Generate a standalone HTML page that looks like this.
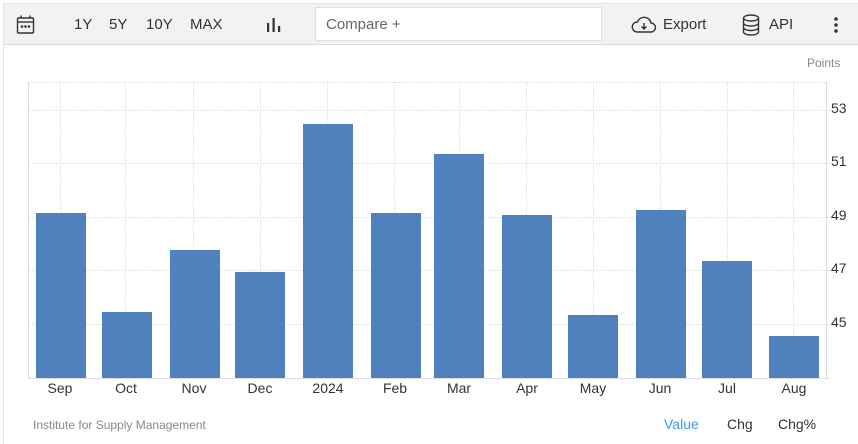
<!DOCTYPE html>
<html><head><meta charset="utf-8"><style>
html,body{margin:0;padding:0;background:#fff;width:858px;height:444px;overflow:hidden;font-family:"Liberation Sans",Arial,sans-serif;}
.page{position:absolute;left:3px;top:3px;width:855px;height:441px;border-left:1px solid #e6e6e6;}
.tb{position:absolute;left:3px;top:3px;width:855px;height:40px;background:#f2f2f2;border-top:1px solid #e3e3e3;border-bottom:1px solid #dcdcdc;border-left:1px solid #e3e3e3;}
.t{position:absolute;font-size:15px;color:#333;top:16px;}
.cmp{position:absolute;left:315px;top:7px;width:287px;height:34px;background:#fff;border:1px solid #e0e0e0;box-sizing:border-box;font-size:15px;color:#666;padding:8px 10px;}
</style></head><body>
<div class="page"></div>
<div class="tb"></div>
<svg style="position:absolute;left:16px;top:14px" width="20" height="22" viewBox="0 0 20 22" fill="none" stroke="#333" stroke-width="1.4"><rect x="1.5" y="4" width="16" height="15" rx="1"/><line x1="1.5" y1="8" x2="17.5" y2="8"/><line x1="5" y1="1.5" x2="5" y2="4"/><line x1="14" y1="1.5" x2="14" y2="4"/><circle cx="6" cy="12.5" r=".6" fill="#333"/><circle cx="9.5" cy="12.5" r=".6" fill="#333"/><circle cx="13" cy="12.5" r=".6" fill="#333"/></svg>
<div class="t" style="left:74px">1Y</div>
<div class="t" style="left:109px">5Y</div>
<div class="t" style="left:146px">10Y</div>
<div class="t" style="left:190px">MAX</div>
<svg style="position:absolute;left:266px;top:17px" width="16" height="16"><rect x="1" y="6" width="2.2" height="9" fill="#333"/><rect x="6.5" y="1" width="2.2" height="14" fill="#333"/><rect x="12" y="9" width="2.2" height="6" fill="#333"/></svg>
<div class="cmp">Compare +</div>
<svg style="position:absolute;left:631px;top:15px" width="26" height="20" viewBox="0 0 26 20" fill="none" stroke="#333" stroke-width="1.4"><path d="M6 17 H20 a4.5 4.5 0 0 0 0-9 a7 7 0 0 0-13.5-1 a5 5 0 0 0-0.5 10z"/><path d="M13 8 v6 M10.5 11.5 l2.5 2.5 2.5-2.5"/></svg>
<div class="t" style="left:663px">Export</div>
<svg style="position:absolute;left:742px;top:14px" width="18" height="22" viewBox="0 0 18 22" fill="none" stroke="#333" stroke-width="1.4"><ellipse cx="9" cy="4" rx="7.5" ry="3"/><path d="M1.5 4 v14 a7.5 3 0 0 0 15 0 v-14 M1.5 9 a7.5 3 0 0 0 15 0 M1.5 13.5 a7.5 3 0 0 0 15 0"/></svg>
<div class="t" style="left:769px">API</div>
<svg style="position:absolute;left:833px;top:17px" width="6" height="16"><circle cx="3" cy="2" r="1.8" fill="#333"/><circle cx="3" cy="8" r="1.8" fill="#333"/><circle cx="3" cy="14" r="1.8" fill="#333"/></svg>

<svg style="position:absolute;left:0;top:0" width="858" height="444" font-family="Liberation Sans, Arial, sans-serif">
<g stroke="#ddd" stroke-width="1" stroke-dasharray="1.5,1.5">
<line x1="29" y1="82.5" x2="826" y2="82.5"/>
<line x1="29" y1="110.5" x2="836" y2="110.5"/>
<line x1="29" y1="163.5" x2="836" y2="163.5"/>
<line x1="29" y1="217.5" x2="836" y2="217.5"/>
<line x1="29" y1="270.5" x2="836" y2="270.5"/>
<line x1="29" y1="324.5" x2="836" y2="324.5"/>
<line x1="60.5" y1="82" x2="60.5" y2="378"/><line x1="125.5" y1="82" x2="125.5" y2="378"/><line x1="193.5" y1="82" x2="193.5" y2="378"/><line x1="260.5" y1="82" x2="260.5" y2="378"/><line x1="327.5" y1="82" x2="327.5" y2="378"/><line x1="394.5" y1="82" x2="394.5" y2="378"/><line x1="459.5" y1="82" x2="459.5" y2="378"/><line x1="526.5" y1="82" x2="526.5" y2="378"/><line x1="593.5" y1="82" x2="593.5" y2="378"/><line x1="660.5" y1="82" x2="660.5" y2="378"/><line x1="727.5" y1="82" x2="727.5" y2="378"/><line x1="793.5" y1="82" x2="793.5" y2="378"/>
</g>
<line x1="28.5" y1="82" x2="28.5" y2="378" stroke="#ddd"/>
<line x1="826.5" y1="82" x2="826.5" y2="378" stroke="#ddd"/>
<g fill="#4f81bd">
<rect x="36" y="213" width="50" height="165"/>
<rect x="102" y="312" width="50" height="66"/>
<rect x="170" y="250" width="50" height="128"/>
<rect x="235" y="272" width="50" height="106"/>
<rect x="303" y="124" width="50" height="254"/>
<rect x="371" y="213" width="50" height="165"/>
<rect x="434" y="154" width="50" height="224"/>
<rect x="502" y="215" width="50" height="163"/>
<rect x="568" y="315" width="50" height="63"/>
<rect x="636" y="210" width="50" height="168"/>
<rect x="702" y="261" width="50" height="117"/>
<rect x="769" y="336" width="50" height="42"/>
</g>
<line x1="28" y1="378.5" x2="830" y2="378.5" stroke="#ddd"/>
<g font-size="14" fill="#333" text-anchor="middle">
<text x="60" y="393">Sep</text><text x="126" y="393">Oct</text><text x="194" y="393">Nov</text><text x="260" y="393">Dec</text><text x="328" y="393">2024</text><text x="395" y="393">Feb</text><text x="459" y="393">Mar</text><text x="527" y="393">Apr</text><text x="593" y="393">May</text><text x="660" y="393">Jun</text><text x="727" y="393">Jul</text><text x="794" y="393">Aug</text>
</g>
<g font-size="14" fill="#333">
<text x="831" y="113">53</text><text x="831" y="166">51</text><text x="831" y="220">49</text><text x="831" y="273">47</text><text x="831" y="327">45</text>
</g>
<text x="807" y="67" font-size="12" fill="#888">Points</text>
<text x="33" y="429" font-size="12" fill="#888">Institute for Supply Management</text>
<text x="664" y="429" font-size="14" fill="#3b9bf0">Value</text>
<text x="727" y="429" font-size="14" fill="#333">Chg</text>
<text x="778" y="429" font-size="14" fill="#333">Chg%</text>
</svg>
</body></html>
